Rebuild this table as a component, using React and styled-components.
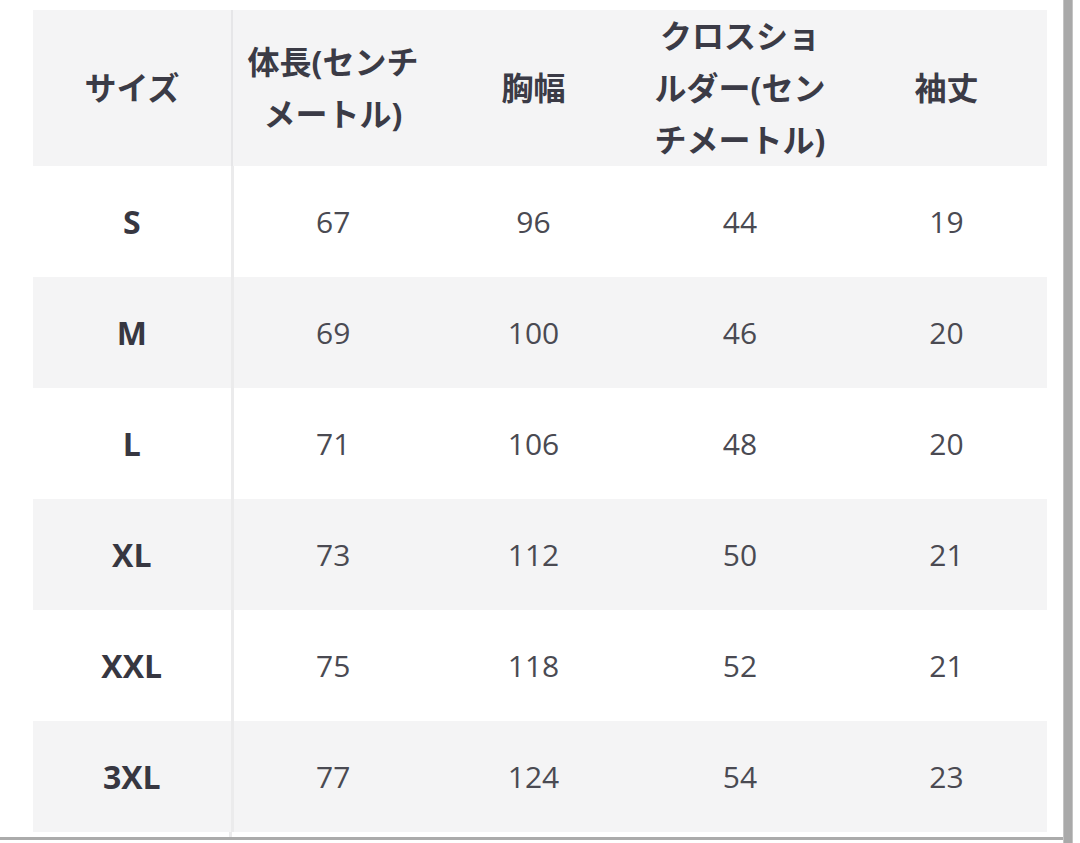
import React from "react";
import styled, { createGlobalStyle } from "styled-components";

const GlobalStyle = createGlobalStyle`
  html, body {
    margin: 0;
    padding: 0;
    background: #ffffff;
  }
  body {
    font-family: "Open Sans", "Noto Sans CJK JP", sans-serif;
    color: #42424c;
  }
`;

const headers = [
  "サイズ",
  "体長(センチメートル)",
  "胸幅",
  "クロスショルダー(センチメートル)",
  "袖丈",
];

const rows = [
  ["S", 67, 96, 44, 19],
  ["M", 69, 100, 46, 20],
  ["L", 71, 106, 48, 20],
  ["XL", 73, 112, 50, 21],
  ["XXL", 75, 118, 52, 21],
  ["3XL", 77, 124, 54, 23],
];

const widths = [199, 201, 201, 212, 201];

function App() {
  return (
    <>
      <GlobalStyle />
      <Screen>
        <Viewport>
          <Table>
            <colgroup>
              {widths.map((w, i) => (
                <col key={i} style={{ width: w }} />
              ))}
            </colgroup>
            <thead>
              <tr>
                {headers.map((h, i) => (
                  <HeadCell key={h} $first={i === 0}>
                    {h}
                  </HeadCell>
                ))}
              </tr>
            </thead>
            <tbody>
              {rows.map((row, r) => (
                <Row key={row[0]} $shaded={r % 2 === 1}>
                  {row.map((v, i) => (
                    <Cell key={i} $first={i === 0}>
                      {v}
                    </Cell>
                  ))}
                </Row>
              ))}
            </tbody>
          </Table>
        </Viewport>
        <Scrollbar />
        <Gutter />
      </Screen>
    </>
  );
}

export default App;

const Screen = styled.div`
  display: flex;
  width: 1080px;
  height: 843px;
  overflow: hidden;
`;

const Viewport = styled.div`
  flex: 1;
  height: 840px;
  box-sizing: border-box;
  padding: 10px 0 0 33px;
  border-bottom: 3px solid #ababab;
  background: linear-gradient(#ebebec, #ebebec) no-repeat 229px 10px / 3px 100%;
`;

const Scrollbar = styled.div`
  width: 10px;
  height: 843px;
  background: #a9a9a9;
  box-shadow: inset 1px 0 0 #c4c4c4, inset -1px 0 0 #c4c4c4;
`;

const Gutter = styled.div`
  width: 7px;
  background: #ffffff;
`;

const Table = styled.table`
  width: 1014px;
  table-layout: fixed;
  border-collapse: collapse;
  border-spacing: 0;
`;

const HeadCell = styled.th`
  background: #f4f4f5;
  padding: 0 14px;
  font-size: 32px;
  font-weight: 700;
  line-height: 52px;
  color: #3b3b46;
  text-align: center;
  vertical-align: middle;
  word-break: break-all;
  border-right: ${(p) => (p.$first ? "2px solid #e6e6e8" : "none")};
`;

const Row = styled.tr`
  background: ${(p) => (p.$shaded ? "#f4f4f5" : "#ffffff")};
`;

const Cell = styled.td`
  height: 111px;
  padding: 0;
  text-align: center;
  vertical-align: middle;
  font-size: ${(p) => (p.$first ? "32px" : "30px")};
  font-weight: ${(p) => (p.$first ? 700 : 400)};
  color: ${(p) => (p.$first ? "#373741" : "#4a4a52")};
  border-right: ${(p) => (p.$first ? "3px solid #ebebec" : "none")};
`;
